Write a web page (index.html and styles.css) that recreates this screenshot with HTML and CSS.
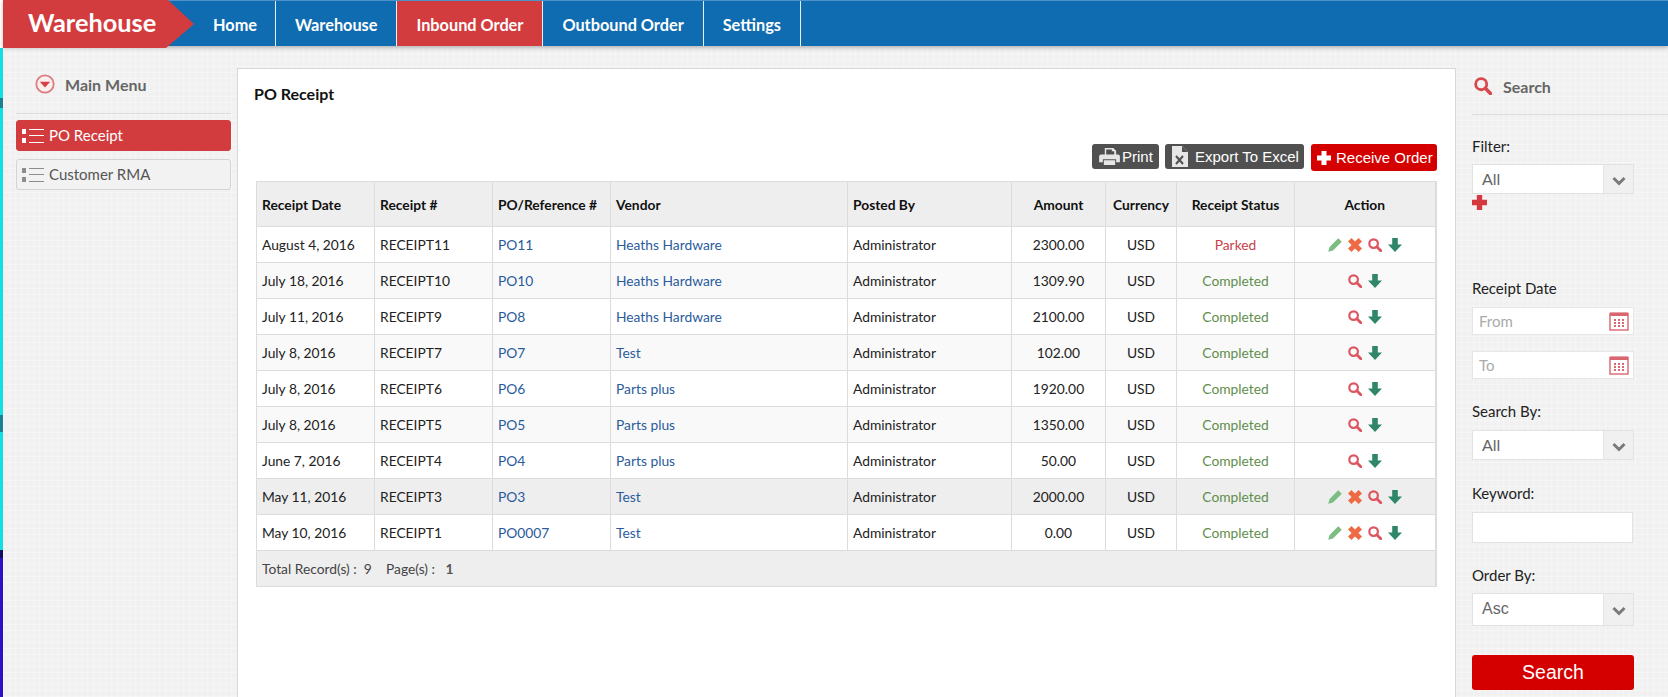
FILE: index.html
```html
<!DOCTYPE html>
<html lang="en">

<head>
    <meta charset="UTF-8">
    <meta name="viewport" content="width=device-width, initial-scale=1.0">
    <title>Warehouse - PO Receipt</title>
    <link rel="stylesheet" href="styles.css">
</head>

<body>
    <svg class="icon-defs" aria-hidden="true">
        <symbol id="i-list" viewBox="0 0 22 16">
            <rect x="0" y="1" width="4" height="5" />
            <rect x="0" y="10" width="4" height="5" />
            <rect x="7" y="1" width="15" height="1" />
            <rect x="7" y="7" width="15" height="1" />
            <rect x="7" y="14" width="15" height="1" />
        </symbol>
        <symbol id="i-pencil" viewBox="0 0 14 14">
            <path fill="#7cbd82" d="M10.200.2l3.600 3.600-8.800 8.600L.2 13.800l1.400-4.800z" />
        </symbol>
        <symbol id="i-cross" viewBox="0 0 14 14">
            <path fill="#ee6a45" d="M3.400 0L7 3.600 10.600 0 14 3.400 10.400 7l3.600 3.600-3.400 3.400L7 10.400 3.400 14 0 10.600 3.600 7 0 3.400z" />
        </symbol>
        <symbol id="i-search" viewBox="0 0 14 14">
            <circle cx="5.600" cy="5.600" r="4.300" fill="none" stroke="currentColor" stroke-width="2.200" />
            <path d="M8.800 8.800l4 4" fill="none" stroke="currentColor" stroke-width="2.800" stroke-linecap="round" />
        </symbol>
        <symbol id="i-down" viewBox="0 0 14 14">
            <path fill="#2f8768" d="M4.200 0h5.600v6.400H14L7 14 0 6.400h4.200z" />
        </symbol>
        <symbol id="i-chevron" viewBox="0 0 14 10">
            <path d="M1.500 2l5.500 5.500L12.500 2" fill="none" stroke="#7a7a7a" stroke-width="3" />
        </symbol>
        <symbol id="i-calendar" viewBox="0 0 20 20">
            <rect x="1" y="2.500" width="18" height="16.500" fill="none" stroke="#d9656e" stroke-width="1.400" />
            <rect x="1" y="1.500" width="18" height="3.500" fill="#d9656e" />
            <path fill="#d9656e" d="M5 8h2v2H5zM9 8h2v2H9zM13 8h2v2h-2zM5 11h2v2H5zM9 11h2v2H9zM13 11h2v2h-2zM5 14h2v2H5zM9 14h2v2H9zM13 14h2v2h-2z" />
        </symbol>
    </svg>

    <header class="topbar">
        <a class="brand" href="#">Warehouse</a>
        <nav>
            <ul class="main-nav">
                <li><a href="#">Home</a></li>
                <li><a href="#">Warehouse</a></li>
                <li class="active"><a href="#">Inbound Order</a></li>
                <li><a href="#">Outbound Order</a></li>
                <li><a href="#">Settings</a></li>
            </ul>
        </nav>
    </header>

    <div class="layout">
        <aside class="side-menu">
            <h3 class="side-title">
                <svg class="menu-dot" viewBox="0 0 20 20">
                    <circle cx="10" cy="10" r="8.700" fill="#fbeeee" stroke="#dd7b7e" stroke-width="1.800" />
                    <path d="M4.800 7.800h10.400L10 13.600z" fill="#d93f45" />
                </svg>
                Main Menu
            </h3>
            <a class="side-link selected" href="#"><svg class="list-icon"><use href="#i-list" /></svg>PO Receipt</a>
            <a class="side-link" href="#"><svg class="list-icon"><use href="#i-list" /></svg>Customer RMA</a>
        </aside>

        <main class="panel">
            <h2 class="panel-title">PO Receipt</h2>

            <div class="toolbar">
                <button type="button" class="btn btn-dark btn-print">
                    <svg class="btn-icon print-icon" viewBox="0 0 22 18">
                        <path fill="#e6e6e6" d="M6 0h9l3 3v4H16V3.500h-2.500V1.500H7.500V7H6zM2 7h18a2 2 0 0 1 2 2v6h-4v-3H4v3H0V9a2 2 0 0 1 2-2zM5 13h12v5H5z" />
                    </svg>Print
                </button>
                <button type="button" class="btn btn-dark btn-export">
                    <svg class="btn-icon excel-icon" viewBox="0 0 16 21">
                        <path fill="#e6e6e6" d="M0 0h10l6 6v15H0z" />
                        <path fill="#505050" d="M10 0v6h6z" />
                        <path stroke="#505050" stroke-width="2" d="M4 10l7 8M11 10l-7 8" />
                    </svg>Export To Excel
                </button>
                <button type="button" class="btn btn-red">
                    <svg class="btn-icon plus-icon" viewBox="0 0 14 14">
                        <path fill="#fff" d="M4.500 0h5v4.500H14v5H9.500V14h-5V9.500H0v-5h4.500z" />
                    </svg>Receive Order
                </button>
            </div>

            <table class="grid">
                <colgroup>
                    <col class="c-date">
                    <col class="c-receipt">
                    <col class="c-po">
                    <col class="c-vendor">
                    <col class="c-posted">
                    <col class="c-amount">
                    <col class="c-currency">
                    <col class="c-status">
                    <col class="c-action">
                </colgroup>
                <thead>
                    <tr>
                        <th>Receipt Date</th>
                        <th>Receipt #</th>
                        <th>PO/Reference #</th>
                        <th>Vendor</th>
                        <th>Posted By</th>
                        <th class="mid">Amount</th>
                        <th class="mid">Currency</th>
                        <th class="mid">Receipt Status</th>
                        <th class="mid">Action</th>
                    </tr>
                </thead>
                <tbody>
                    <tr>
                        <td>August 4, 2016</td>
                        <td>RECEIPT11</td>
                        <td><a href="#">PO11</a></td>
                        <td><a href="#">Heaths Hardware</a></td>
                        <td>Administrator</td>
                        <td class="mid">2300.00</td>
                        <td class="mid">USD</td>
                        <td class="mid parked">Parked</td>
                        <td class="mid"><span class="actions"><svg><use href="#i-pencil" /></svg><svg><use href="#i-cross" /></svg><svg class="find"><use href="#i-search" /></svg><svg><use href="#i-down" /></svg></span></td>
                    </tr>
                    <tr>
                        <td>July 18, 2016</td>
                        <td>RECEIPT10</td>
                        <td><a href="#">PO10</a></td>
                        <td><a href="#">Heaths Hardware</a></td>
                        <td>Administrator</td>
                        <td class="mid">1309.90</td>
                        <td class="mid">USD</td>
                        <td class="mid done">Completed</td>
                        <td class="mid"><span class="actions"><svg class="find"><use href="#i-search" /></svg><svg><use href="#i-down" /></svg></span></td>
                    </tr>
                    <tr>
                        <td>July 11, 2016</td>
                        <td>RECEIPT9</td>
                        <td><a href="#">PO8</a></td>
                        <td><a href="#">Heaths Hardware</a></td>
                        <td>Administrator</td>
                        <td class="mid">2100.00</td>
                        <td class="mid">USD</td>
                        <td class="mid done">Completed</td>
                        <td class="mid"><span class="actions"><svg class="find"><use href="#i-search" /></svg><svg><use href="#i-down" /></svg></span></td>
                    </tr>
                    <tr>
                        <td>July 8, 2016</td>
                        <td>RECEIPT7</td>
                        <td><a href="#">PO7</a></td>
                        <td><a href="#">Test</a></td>
                        <td>Administrator</td>
                        <td class="mid">102.00</td>
                        <td class="mid">USD</td>
                        <td class="mid done">Completed</td>
                        <td class="mid"><span class="actions"><svg class="find"><use href="#i-search" /></svg><svg><use href="#i-down" /></svg></span></td>
                    </tr>
                    <tr>
                        <td>July 8, 2016</td>
                        <td>RECEIPT6</td>
                        <td><a href="#">PO6</a></td>
                        <td><a href="#">Parts plus</a></td>
                        <td>Administrator</td>
                        <td class="mid">1920.00</td>
                        <td class="mid">USD</td>
                        <td class="mid done">Completed</td>
                        <td class="mid"><span class="actions"><svg class="find"><use href="#i-search" /></svg><svg><use href="#i-down" /></svg></span></td>
                    </tr>
                    <tr>
                        <td>July 8, 2016</td>
                        <td>RECEIPT5</td>
                        <td><a href="#">PO5</a></td>
                        <td><a href="#">Parts plus</a></td>
                        <td>Administrator</td>
                        <td class="mid">1350.00</td>
                        <td class="mid">USD</td>
                        <td class="mid done">Completed</td>
                        <td class="mid"><span class="actions"><svg class="find"><use href="#i-search" /></svg><svg><use href="#i-down" /></svg></span></td>
                    </tr>
                    <tr>
                        <td>June 7, 2016</td>
                        <td>RECEIPT4</td>
                        <td><a href="#">PO4</a></td>
                        <td><a href="#">Parts plus</a></td>
                        <td>Administrator</td>
                        <td class="mid">50.00</td>
                        <td class="mid">USD</td>
                        <td class="mid done">Completed</td>
                        <td class="mid"><span class="actions"><svg class="find"><use href="#i-search" /></svg><svg><use href="#i-down" /></svg></span></td>
                    </tr>
                    <tr class="hilite">
                        <td>May 11, 2016</td>
                        <td>RECEIPT3</td>
                        <td><a href="#">PO3</a></td>
                        <td><a href="#">Test</a></td>
                        <td>Administrator</td>
                        <td class="mid">2000.00</td>
                        <td class="mid">USD</td>
                        <td class="mid done">Completed</td>
                        <td class="mid"><span class="actions"><svg><use href="#i-pencil" /></svg><svg><use href="#i-cross" /></svg><svg class="find"><use href="#i-search" /></svg><svg><use href="#i-down" /></svg></span></td>
                    </tr>
                    <tr>
                        <td>May 10, 2016</td>
                        <td>RECEIPT1</td>
                        <td><a href="#">PO0007</a></td>
                        <td><a href="#">Test</a></td>
                        <td>Administrator</td>
                        <td class="mid">0.00</td>
                        <td class="mid">USD</td>
                        <td class="mid done">Completed</td>
                        <td class="mid"><span class="actions"><svg><use href="#i-pencil" /></svg><svg><use href="#i-cross" /></svg><svg class="find"><use href="#i-search" /></svg><svg><use href="#i-down" /></svg></span></td>
                    </tr>
                </tbody>
                <tfoot>
                    <tr>
                        <td colspan="9">Total Record(s) :&nbsp; 9 &nbsp;&nbsp; Page(s) : &nbsp; <b class="page-no">1</b></td>
                    </tr>
                </tfoot>
            </table>
        </main>

        <aside class="search-side">
            <h3 class="search-title">
                <svg class="search-icon"><use href="#i-search" /></svg>
                Search
            </h3>

            <label class="field-label first">Filter:</label>
            <div class="select-box"><span>All</span><i><svg><use href="#i-chevron" /></svg></i></div>
            <svg class="filter-plus" viewBox="0 0 14 14">
                <path fill="#d5393f" d="M4.500 0h5v4.500H14v5H9.500V14h-5V9.500H0v-5h4.500z" />
            </svg>

            <label class="field-label date-label">Receipt Date</label>
            <div class="date-box"><span>From</span><svg><use href="#i-calendar" /></svg></div>
            <div class="date-box second"><span>To</span><svg><use href="#i-calendar" /></svg></div>

            <label class="field-label by-label">Search By:</label>
            <div class="select-box"><span>All</span><i><svg><use href="#i-chevron" /></svg></i></div>

            <label class="field-label kw-label">Keyword:</label>
            <input type="text" class="keyword">

            <label class="field-label order-label">Order By:</label>
            <div class="select-box tall"><span class="asc">Asc</span><i><svg><use href="#i-chevron" /></svg></i></div>

            <button type="button" class="search-btn">Search</button>
        </aside>
    </div>
</body>

</html>
```

FILE: styles.css
```css
html,
body {
    height: 100%;
}

body {
    margin: 0;
    padding-left: 3px;
    height: 697px;
    box-sizing: border-box;
    overflow: hidden;
    font-family: Lato, Arial, sans-serif;
    font-size: 14px;
    color: #222;
    /* strip of the page behind the app, shows on the left edge */
    background: linear-gradient(to bottom,
            #fff 48px,
            #12dfe0 48px, #12dfe0 98px,
            #1a7f90 98px, #1a7f90 108px,
            #12dfe0 108px, #12dfe0 415px,
            #1a7f90 415px, #1a7f90 432px,
            #12dfe0 432px, #12dfe0 550px,
            #101060 550px, #101060 558px,
            #2a12c4 558px);
}

a {
    text-decoration: none;
}

.icon-defs {
    display: none;
}

/* top bar */
.topbar {
    position: relative;
    z-index: 2;
    display: flex;
    align-items: flex-start;
    height: 45px;
    background-color: #106cb1;
    border-top: 1px solid #4d93c9;
    box-shadow: 0 2px 4px rgba(0, 0, 0, 0.25);
}

.brand {
    width: 191px;
    height: 48px;
    margin-top: -1px;
    padding: 6px 0 0 25px;
    box-sizing: border-box;
    flex-shrink: 0;
    background-color: #d33c3e;
    clip-path: polygon(0 0, 165px 0, 191px 24px, 163px 48px, 0 48px);
    color: #fff;
    font-size: 25.300px;
    font-weight: 700;
    line-height: 32px;
}

.main-nav {
    display: flex;
    list-style-type: none;
    margin: 0;
    padding: 0;
}

.main-nav li {
    height: 45px;
    border-right: 1px solid #e8f0f6;
}

.main-nav li:first-child a {
    padding-right: 18px;
}

.main-nav li.active {
    background-color: #d33c3e;
}

.main-nav a {
    display: block;
    padding: 0 19px;
    color: #fff;
    font-size: 16.300px;
    font-weight: 700;
    line-height: 47px;
}

/* page columns */
.layout {
    display: grid;
    grid-template-columns: 234px 1219px 1fr;
    height: 651px;
    background-color: #f1f1f1;
    background-image:
        repeating-linear-gradient(0deg, rgba(255, 255, 255, 0.3) 0 1px, transparent 1px 6px),
        repeating-linear-gradient(90deg, rgba(255, 255, 255, 0.3) 0 1px, transparent 1px 6px);
}

/* left menu */
.side-menu {
    padding: 0 6px 0 13px;
}

.side-title {
    display: flex;
    align-items: center;
    gap: 10px;
    height: 26px;
    margin: 25px 0 6px;
    padding: 0 0 16px 19px;
    border-bottom: 1px solid #dcdcdc;
    color: #666;
    font-size: 16px;
    font-weight: 700;
}

.menu-dot {
    width: 20px;
    height: 20px;
}

.side-link {
    display: flex;
    align-items: center;
    height: 31px;
    margin-bottom: 8px;
    padding: 0 0 2px 5px;
    box-sizing: border-box;
    border: 1px solid #d4d4d4;
    border-radius: 3px;
    background-color: #f2f2f2;
    color: #555;
    font-size: 15px;
}

.side-link.selected {
    border-color: #d33c3e;
    background-color: #d33c3e;
    color: #fff;
}

.list-icon {
    width: 22px;
    height: 16px;
    margin: 2px 5px 0 0;
    fill: #8c8c8c;
}

.selected .list-icon {
    fill: #fff;
}

/* center panel */
.panel {
    margin-top: 22px;
    padding: 0 19px 0 18px;
    border: 1px solid #d8d8d8;
    border-bottom: none;
    background-color: #fff;
}

.panel-title {
    margin: 0 0 0 -2px;
    padding-top: 15px;
    color: #111;
    font-size: 16px;
    font-weight: 700;
    line-height: 20px;
}

.toolbar {
    display: flex;
    justify-content: flex-end;
    align-items: flex-start;
    gap: 6px;
    margin: 40px -1px 10px 0;
}

.btn {
    display: flex;
    align-items: center;
    height: 25px;
    padding: 0;
    border: none;
    border-radius: 3px;
    color: #fff;
    font-family: "Liberation Sans", Arial, sans-serif;
    font-size: 15px;
    cursor: pointer;
}

.btn-dark {
    background-color: #505050;
}

.btn-red {
    width: 126px;
    height: 27px;
    padding-left: 6px;
    background-color: #d40000;
}

.btn-print {
    width: 67px;
    padding-left: 7px;
}

.btn-export {
    width: 139px;
    margin-right: 1px;
    padding-left: 7px;
}

.print-icon {
    width: 21px;
    height: 17px;
    margin-right: 2px;
}

.excel-icon {
    width: 16px;
    height: 21px;
    margin-right: 7px;
}

.plus-icon {
    width: 14px;
    height: 14px;
    margin-right: 5px;
}

/* table */
.grid {
    width: 1179px;
    border-collapse: collapse;
    table-layout: fixed;
    border-right: 2px solid #dcdcdc;
}

.c-date { width: 118px; }
.c-receipt { width: 118px; }
.c-po { width: 118px; }
.c-vendor { width: 237px; }
.c-posted { width: 164px; }
.c-amount { width: 94px; }
.c-currency { width: 71px; }
.c-status { width: 118px; }
.c-action { width: 141px; }

.grid th,
.grid td {
    padding: 0 0 0 5px;
    border: 1px solid #dcdcdc;
    white-space: nowrap;
}

.grid th {
    height: 44px;
    background-color: #eee;
    color: #111;
    font-size: 13.800px;
    font-weight: 700;
    text-align: left;
}

.grid td {
    height: 35px;
    font-size: 13.800px;
}

.grid tbody tr:nth-child(even) {
    background-color: #f9f9f9;
}

.grid tbody tr.hilite {
    background-color: #eee;
}

.grid tfoot td {
    background-color: #eee;
    color: #444;
}

.page-no {
    font-weight: 700;
    color: #555;
}

.grid th.mid,
.grid td.mid {
    padding-left: 0;
    text-align: center;
}

.grid a {
    color: #2a5c9c;
}

.grid td.parked {
    color: #c9404a;
}

.grid td.done {
    color: #5f8f4c;
}

.actions {
    display: inline-flex;
    gap: 6px;
    margin-top: -4px;
    vertical-align: middle;
    color: #dc5560;
}

.actions svg {
    width: 14px;
    height: 14px;
}

/* right search column */
.search-side {
    padding-left: 16px;
}

.search-title {
    display: flex;
    align-items: center;
    gap: 11px;
    height: 26px;
    margin: 27px 0 0;
    padding: 0 0 15px 2px;
    border-bottom: 1px solid #dcdcdc;
    color: #666;
    font-size: 16px;
    font-weight: 700;
}

.search-icon {
    width: 18px;
    height: 18px;
    color: #d6484d;
}

.field-label {
    display: block;
    color: #222;
    font-size: 15px;
    line-height: 20px;
}

.field-label.first { margin-top: 21px; margin-bottom: 8px; }
.date-label { margin-top: 68px; margin-bottom: 9px; }
.by-label { margin-top: 22px; margin-bottom: 9px; }
.kw-label { margin-top: 23px; margin-bottom: 9px; }
.order-label { margin-top: 22px; margin-bottom: 8px; }

.select-box {
    display: flex;
    width: 162px;
    height: 30px;
    box-sizing: border-box;
    border: 1px solid #e2e2e2;
    background-color: #fff;
    color: #666;
    font-size: 16px;
}

.select-box.tall {
    height: 33px;
}

.select-box span {
    flex: 1;
    padding-left: 9px;
    line-height: 28px;
}

.select-box.tall span {
    line-height: 30px;
}

.select-box .asc {
    font-family: "Liberation Sans", Arial, sans-serif;
}

.select-box i {
    display: flex;
    align-items: center;
    justify-content: center;
    width: 29px;
    border-left: 1px solid #e6e6e6;
    background-color: #f0f0f0;
}

.select-box i svg {
    width: 14px;
    height: 10px;
    margin-top: 3px;
}

.filter-plus {
    display: block;
    width: 15px;
    height: 15px;
    margin-top: 1px;
}

.date-box {
    display: flex;
    align-items: center;
    justify-content: space-between;
    width: 162px;
    height: 28px;
    padding: 0 4px 0 6px;
    box-sizing: border-box;
    border: 1px solid #e6e6e6;
    background-color: #fff;
    color: #aaa;
    font-size: 15px;
}

.date-box.second {
    margin-top: 16px;
}

.date-box svg {
    width: 20px;
    height: 20px;
}

.keyword {
    display: block;
    width: 161px;
    height: 31px;
    padding: 0;
    box-sizing: border-box;
    border: 1px solid #e2e2e2;
    background-color: #fff;
}

.search-btn {
    display: block;
    width: 162px;
    height: 35px;
    margin-top: 29px;
    padding: 0;
    border: none;
    border-radius: 3px;
    background-color: #d40000;
    color: #fff;
    font-family: "Liberation Sans", Arial, sans-serif;
    font-size: 19.500px;
    cursor: pointer;
}
```
